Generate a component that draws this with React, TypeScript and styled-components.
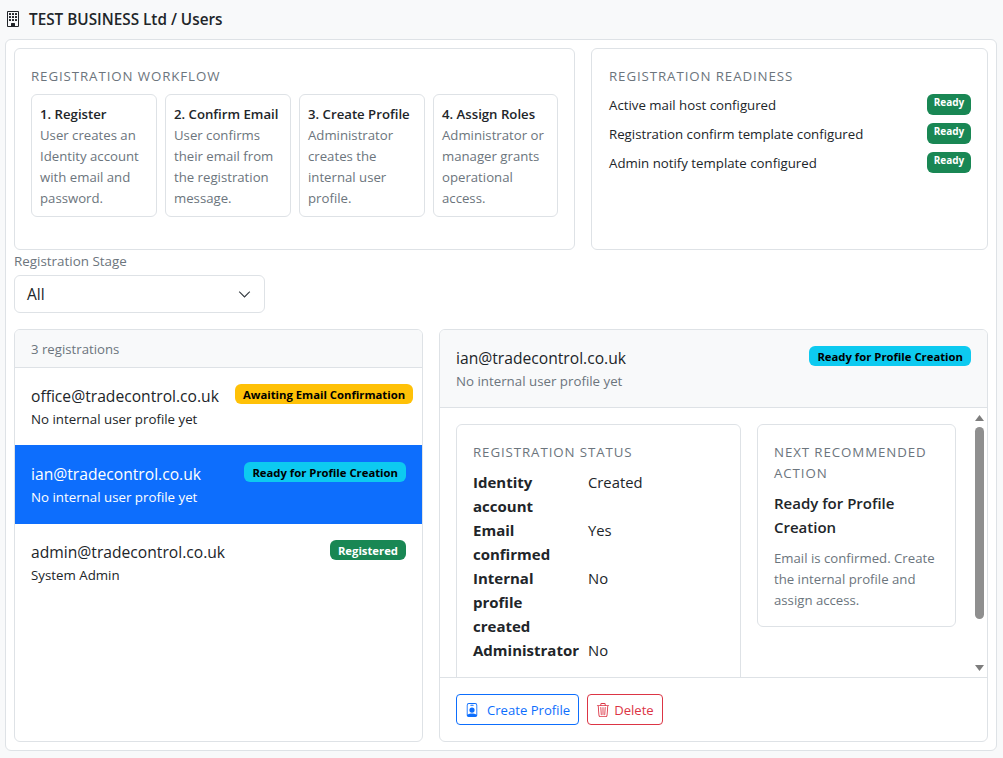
import React from 'react';
import styled, { createGlobalStyle } from 'styled-components';
import { BsBuilding, BsPersonBadge, BsTrash3, BsChevronDown } from 'react-icons/bs';

const GlobalStyle = createGlobalStyle`
  * {
    box-sizing: border-box;
  }

  html, body {
    margin: 0;
    padding: 0;
    background: #f8f9fa;
    overflow: hidden;
  }

  body {
    font-family: "Open Sans", "Noto Sans", "Liberation Sans", sans-serif;
    font-size: 14px;
    color: #212529;
  }
`;

const Page = styled.div`
  width: 1003px;
  height: 758px;
  padding: 0 6px 7px 5px;
  display: flex;
  flex-direction: column;
`;

const TitleBar = styled.header`
  height: 39px;
  padding-bottom: 1px;
  display: flex;
  align-items: center;
  gap: 8px;
  font-size: 15.3px;
  font-weight: 600;
  color: #212529;

  svg {
    font-size: 16px;
  }
`;

const Shell = styled.main`
  flex: 1;
  min-height: 0;
  background: #fff;
  border: 1px solid #dee2e6;
  border-radius: 6px;
  padding: 8px;
  display: flex;
  flex-direction: column;
`;

const TopRow = styled.div`
  display: grid;
  grid-template-columns: 561px 397px;
  gap: 16px;
  height: 202px;
`;

const Panel = styled.section`
  border: 1px solid #dee2e6;
  border-radius: 6px;
  background: #fff;
  padding: 16px;
`;

const ReadinessPanel = styled(Panel)`
  padding-left: 17px;
`;

const PanelHeading = styled.div`
  padding-top: 1px;
  font-size: 13.3px;
  line-height: 21px;
  letter-spacing: 0.9px;
  text-transform: uppercase;
  color: #6c757d;
`;

const Steps = styled.div`
  display: grid;
  grid-template-columns: 126px 126px 126px 125px;
  gap: 8px;
  margin-top: 7px;
`;

const Step = styled.div`
  border: 1px solid #dee2e6;
  border-radius: 6px;
  padding: 9px 8px 7px;
  height: 123px;
`;

const StepTitle = styled.div`
  font-size: 13.2px;
  font-weight: 600;
  line-height: 21px;
  white-space: nowrap;
`;

const StepText = styled.div`
  font-size: 13.2px;
  line-height: 21px;
  color: #6c757d;
`;

const ReadyList = styled.div`
  display: flex;
  flex-direction: column;
  gap: 8px;
  margin-top: 7px;
`;

const ReadyRow = styled.div`
  display: flex;
  justify-content: space-between;
  align-items: center;
  height: 21px;
  font-size: 13.25px;
`;

const Badge = styled.span<{ $tone: 'success' | 'warning' | 'info' }>`
  flex: none;
  display: inline-flex;
  align-items: center;
  justify-content: center;
  height: 20px;
  padding: 0 8px;
  border-radius: 6px;
  font-size: 11.3px;
  font-weight: 700;
  white-space: nowrap;
  color: ${p => (p.$tone === 'success' ? '#fff' : '#000')};
  background: ${p =>
    p.$tone === 'success' ? '#198754' : p.$tone === 'warning' ? '#ffc107' : '#0dcaf0'};
`;

const ReadyBadge = styled(Badge)`
  height: 21px;
  width: 44px;
  padding: 0 0 5px;
  font-size: 10px;
`;

const StageLabel = styled.label`
  display: block;
  margin-top: 1px;
  font-size: 13.4px;
  line-height: 21px;
  color: #6c757d;
`;

const Select = styled.div`
  width: 251px;
  height: 38px;
  margin-top: 3px;
  border: 1px solid #dee2e6;
  border-radius: 6px;
  padding: 0 13px 0 12px;
  display: flex;
  align-items: center;
  justify-content: space-between;
  font-size: 15.5px;

  svg {
    font-size: 13px;
    color: #343a40;
    stroke-width: 0.6px;
  }
`;

const BottomRow = styled.div`
  flex: 1;
  min-height: 0;
  margin-top: 16px;
  display: grid;
  grid-template-columns: 409px 549px;
  gap: 16px;
`;

const Card = styled.section`
  border: 1px solid #dee2e6;
  border-radius: 6px;
  background: #fff;
  overflow: hidden;
  display: flex;
  flex-direction: column;
  min-height: 0;
`;

const ListHeader = styled.div`
  height: 38px;
  padding: 1px 16px 0;
  display: flex;
  align-items: center;
  background: #f8f9fa;
  border-bottom: 1px solid #dee2e6;
  font-size: 13.2px;
  color: #6c757d;
`;

const Item = styled.div<{ $active?: boolean; $height: number }>`
  height: ${p => p.$height}px;
  padding: ${p => (p.$active ? 17 : 16)}px 16px 0;
  background: ${p => (p.$active ? '#0d6efd' : '#fff')};
  color: ${p => (p.$active ? '#fff' : '#212529')};
`;

const ItemTop = styled.div`
  display: flex;
  justify-content: space-between;
  align-items: flex-start;
  gap: 16px;
`;

const Email = styled.div`
  padding-top: 1px;
  font-size: 15.65px;
  font-weight: 500;
  line-height: 23px;
  white-space: nowrap;
`;

const ItemSub = styled.div`
  font-size: 13.3px;
  line-height: 21px;
  margin-top: 1px;
`;

const DetailHeader = styled.div`
  height: 78px;
  flex: none;
  padding: 16px;
  display: flex;
  justify-content: space-between;
  align-items: flex-start;
  background: #f8f9fa;
  border-bottom: 1px solid #dee2e6;
`;

const HeaderSub = styled.div`
  font-size: 13.3px;
  line-height: 21px;
  margin-top: 1px;
  color: #6c757d;
`;

const DetailMiddle = styled.div`
  flex: 1;
  min-height: 0;
  display: flex;
`;

const DetailBody = styled.div`
  flex: 1;
  min-width: 0;
  overflow: hidden;
  padding: 16px;
  display: grid;
  grid-template-columns: 285px 199px;
  gap: 16px;
  align-items: start;
`;

const ScrollBar = styled.div`
  flex: none;
  width: 15px;
  padding: 7px 3px 6px;
  display: flex;
  flex-direction: column;
  align-items: center;
`;

const ScrollArrow = styled.svg`
  flex: none;
  display: block;
  width: 9px;
  height: 6px;
  fill: #7d7d7d;
`;

const ScrollThumb = styled.div`
  flex: none;
  width: 9px;
  height: 192px;
  margin-top: 6px;
  border-radius: 5px;
  background: #8f8f8f;
`;

const ScrollSpacer = styled.div`
  flex: 1;
`;

const InfoCard = styled.div`
  border: 1px solid #dee2e6;
  border-radius: 6px;
  padding: 16px;
`;

const StatusCard = styled(InfoCard)`
  min-height: 300px;
`;

const StatusGrid = styled.dl`
  margin: 0;
  display: grid;
  grid-template-columns: 105px 1fr;
  column-gap: 10px;
  padding-top: 7px;
`;

const Term = styled.dt`
  font-size: 15px;
  font-weight: 700;
  line-height: 24px;
`;

const Value = styled.dd`
  margin: 0;
  font-size: 14.8px;
  line-height: 24px;
`;

const ActionTitle = styled.div`
  margin-top: 7px;
  font-size: 15px;
  font-weight: 600;
  line-height: 24px;
`;

const ActionText = styled.p`
  margin: 9px 0 -1px;
  font-size: 13.2px;
  line-height: 21px;
  color: #6c757d;
`;

const Footer = styled.div`
  flex: none;
  height: 64px;
  padding: 16px;
  display: flex;
  gap: 8px;
  border-top: 1px solid #dee2e6;
`;

const Button = styled.button<{ $tone: 'primary' | 'danger'; $gap: number }>`
  height: 31px;
  padding: 0 8px;
  display: inline-flex;
  align-items: center;
  gap: ${p => p.$gap}px;
  background: #fff;
  border: 1px solid ${p => (p.$tone === 'primary' ? '#0d6efd' : '#dc3545')};
  border-radius: 4px;
  color: ${p => (p.$tone === 'primary' ? '#0d6efd' : '#dc3545')};
  font-family: inherit;
  font-size: 13.1px;
  white-space: nowrap;

  svg {
    font-size: 14px;
  }
`;

const steps = [
  { title: '1. Register', text: 'User creates an Identity account with email and password.' },
  { title: '2. Confirm Email', text: 'User confirms their email from the registration message.' },
  { title: '3. Create Profile', text: 'Administrator creates the internal user profile.' },
  { title: '4. Assign Roles', text: 'Administrator or manager grants operational access.' },
];

const checks = [
  'Active mail host configured',
  'Registration confirm template configured',
  'Admin notify template configured',
];

const registrations = [
  { email: 'office@tradecontrol.co.uk', sub: 'No internal user profile yet', stage: 'Awaiting Email Confirmation', tone: 'warning' as const, height: 77 },
  { email: 'ian@tradecontrol.co.uk', sub: 'No internal user profile yet', stage: 'Ready for Profile Creation', tone: 'info' as const, height: 79, active: true },
  { email: 'admin@tradecontrol.co.uk', sub: 'System Admin', stage: 'Registered', tone: 'success' as const, height: 78 },
];

const status = [
  { term: 'Identity account', value: 'Created' },
  { term: 'Email confirmed', value: 'Yes' },
  { term: 'Internal profile created', value: 'No' },
  { term: 'Administrator', value: 'No' },
];

export default function App() {
  return (
    <Page>
      <GlobalStyle />
      <TitleBar>
        <BsBuilding />
        TEST BUSINESS Ltd / Users
      </TitleBar>
      <Shell>
        <TopRow>
          <Panel>
            <PanelHeading>Registration Workflow</PanelHeading>
            <Steps>
              {steps.map(step => (
                <Step key={step.title}>
                  <StepTitle>{step.title}</StepTitle>
                  <StepText>{step.text}</StepText>
                </Step>
              ))}
            </Steps>
          </Panel>
          <ReadinessPanel>
            <PanelHeading>Registration Readiness</PanelHeading>
            <ReadyList>
              {checks.map(check => (
                <ReadyRow key={check}>
                  {check}
                  <ReadyBadge $tone="success">Ready</ReadyBadge>
                </ReadyRow>
              ))}
            </ReadyList>
          </ReadinessPanel>
        </TopRow>
        <StageLabel>Registration Stage</StageLabel>
        <Select>
          All
          <BsChevronDown />
        </Select>
        <BottomRow>
          <Card>
            <ListHeader>3 registrations</ListHeader>
            {registrations.map(reg => (
              <Item key={reg.email} $active={reg.active} $height={reg.height}>
                <ItemTop>
                  <Email>{reg.email}</Email>
                  <Badge $tone={reg.tone}>{reg.stage}</Badge>
                </ItemTop>
                <ItemSub>{reg.sub}</ItemSub>
              </Item>
            ))}
          </Card>
          <Card>
            <DetailHeader>
              <div>
                <Email>ian@tradecontrol.co.uk</Email>
                <HeaderSub>No internal user profile yet</HeaderSub>
              </div>
              <Badge $tone="info">Ready for Profile Creation</Badge>
            </DetailHeader>
            <DetailMiddle>
              <DetailBody>
                <StatusCard>
                  <PanelHeading>Registration Status</PanelHeading>
                  <StatusGrid>
                    {status.map(row => (
                      <React.Fragment key={row.term}>
                        <Term>{row.term}</Term>
                        <Value>{row.value}</Value>
                      </React.Fragment>
                    ))}
                  </StatusGrid>
                </StatusCard>
                <InfoCard>
                  <PanelHeading>Next Recommended Action</PanelHeading>
                  <ActionTitle>Ready for Profile Creation</ActionTitle>
                  <ActionText>Email is confirmed. Create the internal profile and assign access.</ActionText>
                </InfoCard>
              </DetailBody>
              <ScrollBar>
                <ScrollArrow viewBox="0 0 9 6">
                  <path d="M4.5 0 9 6H0z" />
                </ScrollArrow>
                <ScrollThumb />
                <ScrollSpacer />
                <ScrollArrow viewBox="0 0 9 6">
                  <path d="M0 0h9L4.5 6z" />
                </ScrollArrow>
              </ScrollBar>
            </DetailMiddle>
            <Footer>
              <Button $tone="primary" $gap={8}>
                <BsPersonBadge />
                Create Profile
              </Button>
              <Button $tone="danger" $gap={4}>
                <BsTrash3 />
                Delete
              </Button>
            </Footer>
          </Card>
        </BottomRow>
      </Shell>
    </Page>
  );
}
